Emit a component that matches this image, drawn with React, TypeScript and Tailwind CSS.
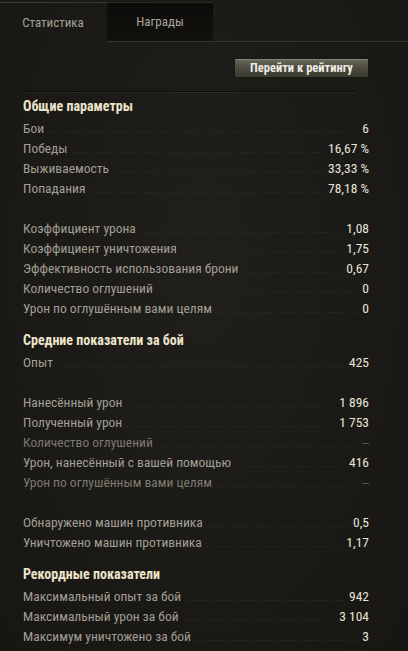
import React from 'react'

type Row = { label: string; value: string; dim?: boolean } | null

const FONT = { fontFamily: '"Roboto Condensed", "Liberation Sans Narrow", "DejaVu Sans Condensed", Roboto, sans-serif' }

const SECTIONS: { title: string; rows: Row[] }[] = [
  {
    title: 'Общие параметры',
    rows: [
      { label: 'Бои', value: '6' },
      { label: 'Победы', value: '16,67 %' },
      { label: 'Выживаемость', value: '33,33 %' },
      { label: 'Попадания', value: '78,18 %' },
      null,
      { label: 'Коэффициент урона', value: '1,08' },
      { label: 'Коэффициент уничтожения', value: '1,75' },
      { label: 'Эффективность использования брони', value: '0,67' },
      { label: 'Количество оглушений', value: '0' },
      { label: 'Урон по оглушённым вами целям', value: '0' },
    ],
  },
  {
    title: 'Средние показатели за бой',
    rows: [
      { label: 'Опыт', value: '425' },
      null,
      { label: 'Нанесённый урон', value: '1 896' },
      { label: 'Полученный урон', value: '1 753' },
      { label: 'Количество оглушений', value: '--', dim: true },
      { label: 'Урон, нанесённый с вашей помощью', value: '416' },
      { label: 'Урон по оглушённым вами целям', value: '--', dim: true },
      null,
      { label: 'Обнаружено машин противника', value: '0,5' },
      { label: 'Уничтожено машин противника', value: '1,17' },
    ],
  },
  {
    title: 'Рекордные показатели',
    rows: [
      { label: 'Максимальный опыт за бой', value: '942' },
      { label: 'Максимальный урон за бой', value: '3 104' },
      { label: 'Максимум уничтожено за бой', value: '3' },
    ],
  },
]

function StatRow({ row }: { row: Row }) {
  if (!row) return <div className="h-[20px]" />
  return (
    <div className="flex h-[20px] items-end text-[13.5px] leading-[19px]">
      <span className={row.dim ? 'text-[#7c7a71]' : 'text-[#a19f95]'}>{row.label}</span>
      <span className="mx-[5px] mb-[5px] h-px flex-1 bg-[linear-gradient(to_right,#302e29_1px,transparent_1px)] bg-[length:3px_1px]" />
      <span className={row.dim ? 'text-[#5e5c54]' : 'text-[#e6e4da]'}>{row.value}</span>
    </div>
  )
}

export default function App() {
  return (
    <div className="h-[651px] w-[408px] overflow-hidden bg-[radial-gradient(ellipse_at_50%_40%,#211f1b,#181612)]" style={FONT}>
      {/* вкладки */}
      <div className="flex h-[42px] pt-[2px]">
        <div className="flex w-[107px] items-center justify-center border-t border-[#3a3832] pr-[1px] text-[13px] text-[#a3a198]">
          Статистика
        </div>
        <div className="flex w-[106px] items-center justify-center border-t border-b border-t-[#2c2a26] border-b-[#36342e] bg-[linear-gradient(to_bottom,#0c0b09,#12110e)] text-[13px] text-[#a9a79e]">
          Награды
        </div>
        <div className="flex-1 self-end border-b border-[#36342e]" />
      </div>

      <div className="pl-[23px] pr-[39px]">
        <div className="flex justify-end pt-[16px]">
          <button className="flex h-[20px] w-[135px] items-center justify-center rounded-[2px] border border-[#181815] bg-[linear-gradient(to_bottom,#6a6a5c,#4a4a3f_50%,#3a3a31)] text-[12.5px] font-bold text-[#ecebe2] shadow-[inset_0_1px_0_rgba(255,255,255,0.18)]">
            Перейти к рейтингу
          </button>
        </div>

        <div className="mt-[13px] mr-[14px] h-[2px] border-t border-b border-t-[#0b0a08] border-b-[#2a2823]" />

        {SECTIONS.map((s, i) => (
          <div key={s.title} className={i === 0 ? 'mt-[3px]' : 'mt-[12px]'}>
            <div className="h-[22px] text-[14px] font-bold leading-[20px] text-[#ece5cb]">{s.title}</div>
            {s.rows.map((r, j) => (
              <StatRow key={j} row={r} />
            ))}
          </div>
        ))}
      </div>
    </div>
  )
}
